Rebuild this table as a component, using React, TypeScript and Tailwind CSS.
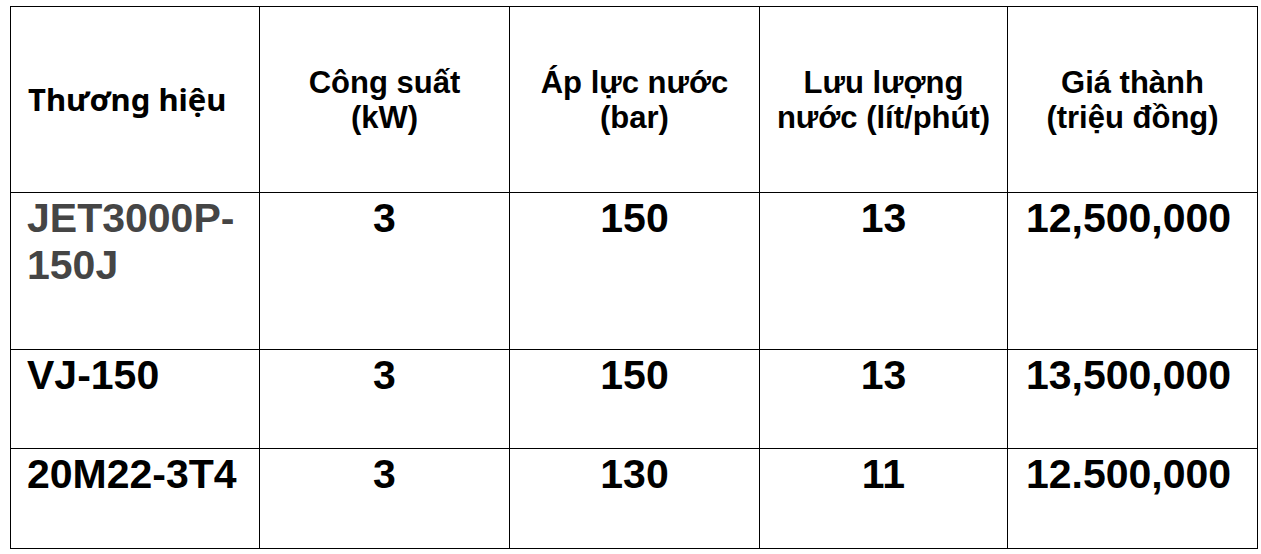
import React from "react";

const arial = { fontFamily: '"Liberation Sans", Arial, sans-serif' };

const rows = [
  { name: "JET3000P-150J", gray: true, p: "3", bar: "150", flow: "13", price: "12,500,000", h: "h-[157px]" },
  { name: "VJ-150", gray: false, p: "3", bar: "150", flow: "13", price: "13,500,000", h: "h-[99px]" },
  { name: "20M22-3T4", gray: false, p: "3", bar: "130", flow: "11", price: "12.500,000", h: "h-[100px]" },
];

export default function App() {
  return (
    <div className="bg-white w-[1261px] h-[554px] pt-[6px] pl-[10px]" style={arial}>
      <table className="table-fixed border-collapse w-[1247px] text-black font-bold">
        <colgroup>
          <col className="w-[249px]" />
          <col className="w-[250px]" />
          <col className="w-[250px]" />
          <col className="w-[248px]" />
          <col className="w-[250px]" />
        </colgroup>
        <thead>
          <tr className="h-[186px]">
            <th
              className="border border-black text-left align-middle pl-[17px] text-[31px] font-bold leading-[35px] pb-[1px]"
              style={{ fontFamily: '"Noto Sans", "DejaVu Sans", sans-serif' }}
            >
              Thương hiệu
            </th>
            <th className="border border-black text-center align-middle text-[31px] leading-[35px] font-bold pb-[0px]">
              Công suất<br />(kW)
            </th>
            <th className="border border-black text-center align-middle text-[31px] leading-[35px] font-bold pb-[0px]">
              Áp lực nước<br />(bar)
            </th>
            <th className="border border-black text-center align-middle text-[31px] leading-[35px] font-bold pb-[0px]">
              Lưu lượng<br />nước (lít/phút)
            </th>
            <th className="border border-black text-center align-middle text-[31px] leading-[35px] font-bold pb-[0px]">
              Giá thành<br />(triệu đồng)
            </th>
          </tr>
        </thead>
        <tbody>
          {rows.map((r) => (
            <tr key={r.name} className={r.h}>
              <td
                className={
                  "border border-black align-top pt-[2px] pl-[16px] pr-[20px] text-[41px] leading-[47px] font-bold " +
                  (r.gray ? "text-[#454545]" : "text-black")
                }
              >
                {r.name}
              </td>
              <td className="border border-black align-top pt-[2px] text-center text-[41px] leading-[47px] font-bold">
                {r.p}
              </td>
              <td className="border border-black align-top pt-[2px] text-center text-[41px] leading-[47px] font-bold">
                {r.bar}
              </td>
              <td className="border border-black align-top pt-[2px] text-center text-[41px] leading-[47px] font-bold">
                {r.flow}
              </td>
              <td className="border border-black align-top pt-[2px] text-center pr-[8px] text-[41px] leading-[47px] font-bold">
                {r.price}
              </td>
            </tr>
          ))}
        </tbody>
      </table>
    </div>
  );
}
